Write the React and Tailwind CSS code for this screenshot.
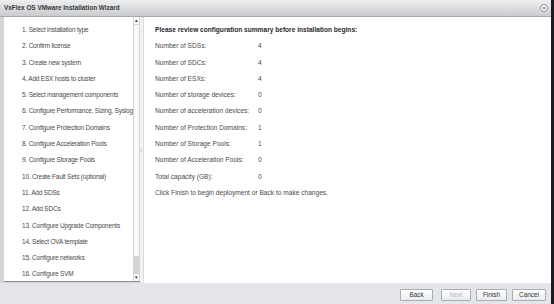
import React from "react";

const steps = [
  "1. Select installation type",
  "2. Confirm license",
  "3. Create new system",
  "4. Add ESX hosts to cluster",
  "5. Select management components",
  "6. Configure Performance, Sizing, Syslog",
  "7. Configure Protection Domains",
  "8. Configure Acceleration Pools",
  "9. Configure Storage Pools",
  "10. Create Fault Sets (optional)",
  "11. Add SDSs",
  "12. Add SDCs",
  "13. Configure Upgrade Components",
  "14. Select OVA template",
  "15. Configure networks",
  "16. Configure SVM",
];

const summary = [
  ["Number of SDSs:", "4"],
  ["Number of SDCs:", "4"],
  ["Number of ESXs:", "4"],
  ["Number of storage devices:", "0"],
  ["Number of acceleration devices:", "0"],
  ["Number of Protection Domains:", "1"],
  ["Number of Storage Pools:", "1"],
  ["Number of Acceleration Pools:", "0"],
  ["Total capacity (GB):", "0"],
];

function WizButton({ children, disabled, width }) {
  return (
    <button
      className={
        "block h-[12px] p-0 border border-[#a9adb2] rounded-[1px] bg-gradient-to-b from-[#ffffff] to-[#e9ebed] text-[6.4px] leading-none " +
        width +
        (disabled ? " text-[#b5b8bc]" : " text-[#333]")
      }
    >
      {children}
    </button>
  );
}

export default function App() {
  return (
    <div
      className="w-[554px] h-[304px] bg-[#1b1d20] flex overflow-hidden"
      style={{ fontFamily: '"Liberation Sans", Arial, sans-serif' }}
    >
      {/* window */}
      <div className="w-[551px] h-full flex flex-col bg-[#e3e5e8]">
        {/* title bar */}
        <div className="h-[17px] shrink-0 flex items-center justify-between pl-[4px] pr-[3px] bg-gradient-to-b from-[#eeeff0] to-[#c9cbce] border-b border-[#a6a9ad]">
          <span className="text-[6.4px] font-bold text-[#3a3a3a]">
            VxFlex OS VMware Installation Wizard
          </span>
          <div className="w-[8px] h-[8px] rounded-full bg-[#f4f4f4] border border-[#9a9a9a] flex items-center justify-center text-[6px] leading-none text-[#555]">
            ×
          </div>
        </div>

        {/* body */}
        <div className="h-[266px] shrink-0 flex pl-[4px] bg-[#d3d5d8]">
          {/* step list */}
          <div className="w-[136px] h-[265px] flex bg-white border-b border-[#8d9094]">
            <div className="flex-1 pl-[18px] pt-[5px] text-[6.5px] tracking-[-0.2px] leading-[16.3px] text-[#4a4a4a] whitespace-nowrap overflow-hidden">
              {steps.map((s) => (
                <div key={s}>{s}</div>
              ))}
            </div>
            {/* scrollbar */}
            <div className="w-[7px] flex flex-col border-l border-r border-[#d6d6d6] bg-[#fafafa]">
              <div className="h-[8px] flex items-center justify-center text-[5px] text-[#222] border-b border-[#d6d6d6]">
                ▴
              </div>
              <div className="flex-1 flex flex-col justify-end">
                <div className="h-[18px] bg-[#d4d4d4]" />
              </div>
              <div className="h-[7px] flex items-center justify-center text-[5px] text-[#222]">
                ▾
              </div>
            </div>
          </div>

          {/* splitter */}
          <div className="w-[4px] flex items-center justify-center bg-[#f2f2f2] border-r border-[#dcdcdc]">
            <span className="text-[5px] text-[#9a9a9a] leading-none">⁞⁞</span>
          </div>

          {/* summary */}
          <div className="flex-1 bg-white pl-[11px] pt-[5px] text-[6.6px] leading-[16.3px] text-[#4a4a4a]">
            <div className="font-bold text-[#2a2a2a]">
              Please review configuration summary before installation begins:
            </div>
            {summary.map(([label, value]) => (
              <div key={label} className="flex">
                <span className="w-[103px]">{label}</span>
                <span>{value}</span>
              </div>
            ))}
            <div>Click Finish to begin deployment or Back to make changes.</div>
          </div>
        </div>

        {/* footer */}
        <div className="flex-1 flex items-start justify-end pt-[6px] pr-[5px] bg-[#e3e5e8]">
          <WizButton width="w-[33px]">Back</WizButton>
          <div className="flex gap-[5px] ml-[8px]">
            <WizButton width="w-[30px]" disabled>Next</WizButton>
            <WizButton width="w-[31px]">Finish</WizButton>
            <WizButton width="w-[34px]">Cancel</WizButton>
          </div>
        </div>
      </div>
    </div>
  );
}
